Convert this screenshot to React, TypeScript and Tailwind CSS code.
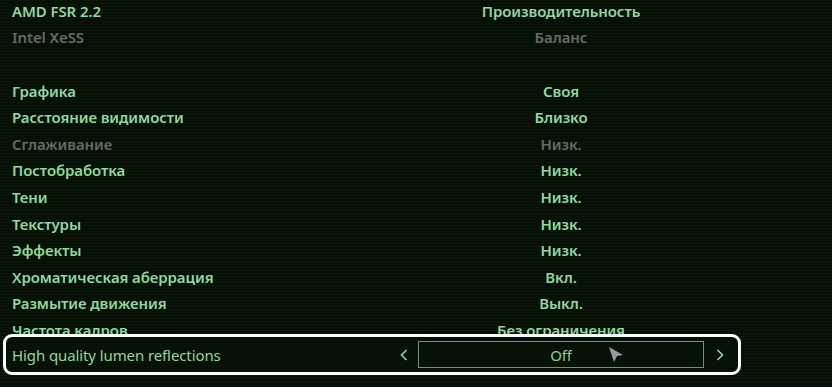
const ROWS: { label: string; value: string; dim?: boolean }[] = [
  { label: 'AMD FSR 2.2', value: 'Производительность' },
  { label: 'Intel XeSS', value: 'Баланс', dim: true },
  { label: '', value: '' },
  { label: 'Графика', value: 'Своя' },
  { label: 'Расстояние видимости', value: 'Близко' },
  { label: 'Сглаживание', value: 'Низк.', dim: true },
  { label: 'Постобработка', value: 'Низк.' },
  { label: 'Тени', value: 'Низк.' },
  { label: 'Текстуры', value: 'Низк.' },
  { label: 'Эффекты', value: 'Низк.' },
  { label: 'Хроматическая аберрация', value: 'Вкл.' },
  { label: 'Размытие движения', value: 'Выкл.' },
  { label: 'Частота кадров', value: 'Без ограничения' },
]

function Chevron({ dir }: { dir: 'left' | 'right' }) {
  return (
    <svg width="8" height="12" viewBox="0 0 8 12" fill="none" stroke="#8fd99b" strokeWidth="1.6">
      {dir === 'left' ? <path d="M6.5 1 L1.5 6 L6.5 11" /> : <path d="M1.5 1 L6.5 6 L1.5 11" />}
    </svg>
  )
}

export default function App() {
  return (
    <div className="w-[832px] h-[387px] overflow-hidden bg-[#061107] bg-[repeating-linear-gradient(0deg,#050f06_0px,#050f06_2px,#081509_2px,#081509_3px)] font-['Noto_Sans',sans-serif] text-[15px] tracking-[-0.1px]">
      <div className="-mt-[2.3px]">
        {ROWS.map((r, i) => (
          <div key={i} className="flex items-center h-[26.6px] font-semibold">
            <div className={`w-[400px] pl-3 ${r.dim ? 'text-[#666a66]' : 'text-[#8fd99b]'}`}>{r.label}</div>
            <div className={`w-[322px] text-center ${r.dim ? 'text-[#666a66]' : 'text-[#8fd99b]'}`}>{r.value}</div>
          </div>
        ))}
        <div className="relative -mt-[9px] ml-[3px] w-[738px] h-[41px] rounded-[9px] border-[3px] border-white bg-[#061107] flex items-center">
          <div className="w-[394px] pl-[6px] text-[#8fd99b]">High quality lumen reflections</div>
          <Chevron dir="left" />
          <div className="ml-[10px] w-[286px] h-[27px] border-[1.5px] border-[#5e9e67] flex items-center justify-center text-[#86cf92]">
            Off
          </div>
          <div className="ml-[12px]">
            <Chevron dir="right" />
          </div>
          <svg className="absolute left-[602px] top-[9px]" width="16" height="18" viewBox="0 0 16 18">
            <path d="M1 1 L15 9 L9 10 L6 16 Z" fill="#9b9b9b" />
          </svg>
        </div>
      </div>
    </div>
  )
}
